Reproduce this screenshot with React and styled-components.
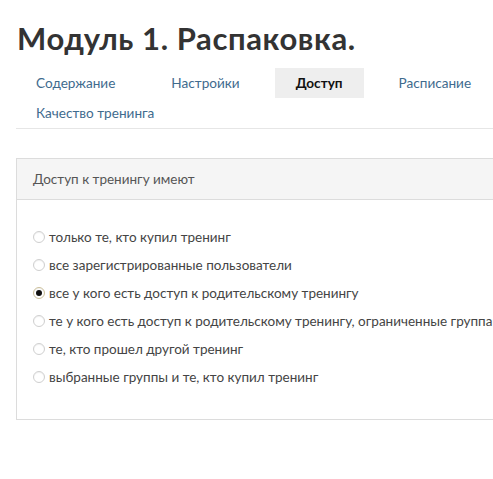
import React from "react";
import styled, { createGlobalStyle } from "styled-components";

const GlobalStyle = createGlobalStyle`
  html, body {
    margin: 0;
    padding: 0;
    background: #fff;
    overflow-x: hidden;
  }
  body {
    font-family: Lato, "Open Sans", "Liberation Sans", sans-serif;
    color: #444;
  }
`;

const Page = styled.div`
  padding: 20px 0 40px 16px;
  width: 640px;
`;

const Title = styled.h1`
  margin: 0 0 12px 1px;
  font-size: 31px;
  line-height: 36px;
  font-weight: 700;
  color: #333;
  letter-spacing: 0.6px;
`;

const Tabs = styled.div`
  display: flex;
  flex-wrap: wrap;
  width: 520px;
  margin-left: -1px;
  column-gap: 14px;
`;

const Tabline = styled.div`
  height: 1px;
  background: #e6e6e6;
  margin-bottom: 29px;
`;

const Tab = styled.div`
  padding: 0 21px;
  height: 30px;
  line-height: 30px;
  font-size: 13.6px;
  white-space: nowrap;
  color: ${(p) => (p.$active ? "#111" : "#3f6b8e")};
  font-weight: ${(p) => (p.$active ? 700 : 400)};
  background: ${(p) => (p.$active ? "#eeeeee" : "transparent")};
`;

const Panel = styled.div`
  border: 1px solid #dcdcdc;
  background: #fff;
`;

const PanelHead = styled.div`
  background: #f5f5f5;
  border-bottom: 1px solid #dcdcdc;
  height: 40px;
  line-height: 40px;
  padding-left: 16px;
  font-size: 13.5px;
  color: #555;
`;

const PanelBody = styled.div`
  padding: 23px 16px 28px;
`;

const Option = styled.label`
  display: flex;
  align-items: center;
  height: 28px;
  font-size: 13.5px;
  color: #444;
  white-space: nowrap;
`;

const Radio = styled.span`
  box-sizing: border-box;
  width: 12px;
  height: 12px;
  border-radius: 50%;
  margin-right: 4px;
  flex-shrink: 0;
  background: #fff;
  border: 1px solid ${(p) => (p.$checked ? "#cbbf9a" : "#cfcfcf")};
  box-shadow: inset 0 1px 1px rgba(0, 0, 0, 0.06);
  display: flex;
  align-items: center;
  justify-content: center;

  &::after {
    content: "";
    width: 6px;
    height: 6px;
    border-radius: 50%;
    background: ${(p) => (p.$checked ? "#111" : "transparent")};
  }
`;

const tabs = ["Содержание", "Настройки", "Доступ", "Расписание", "Качество тренинга"];

const options = [
  "только те, кто купил тренинг",
  "все зарегистрированные пользователи",
  "все у кого есть доступ к родительскому тренингу",
  "те у кого есть доступ к родительскому тренингу, ограниченные группами",
  "те, кто прошел другой тренинг",
  "выбранные группы и те, кто купил тренинг",
];

export default function App() {
  return (
    <>
      <GlobalStyle />
      <Page>
        <Title>Модуль 1. Распаковка.</Title>
        <Tabs>
          {tabs.map((t) => (
            <Tab key={t} $active={t === "Доступ"}>
              {t}
            </Tab>
          ))}
        </Tabs>
        <Tabline />
        <Panel>
          <PanelHead>Доступ к тренингу имеют</PanelHead>
          <PanelBody>
            {options.map((o, i) => (
              <Option key={o}>
                <Radio $checked={i === 2} />
                {o}
              </Option>
            ))}
          </PanelBody>
        </Panel>
      </Page>
    </>
  );
}
